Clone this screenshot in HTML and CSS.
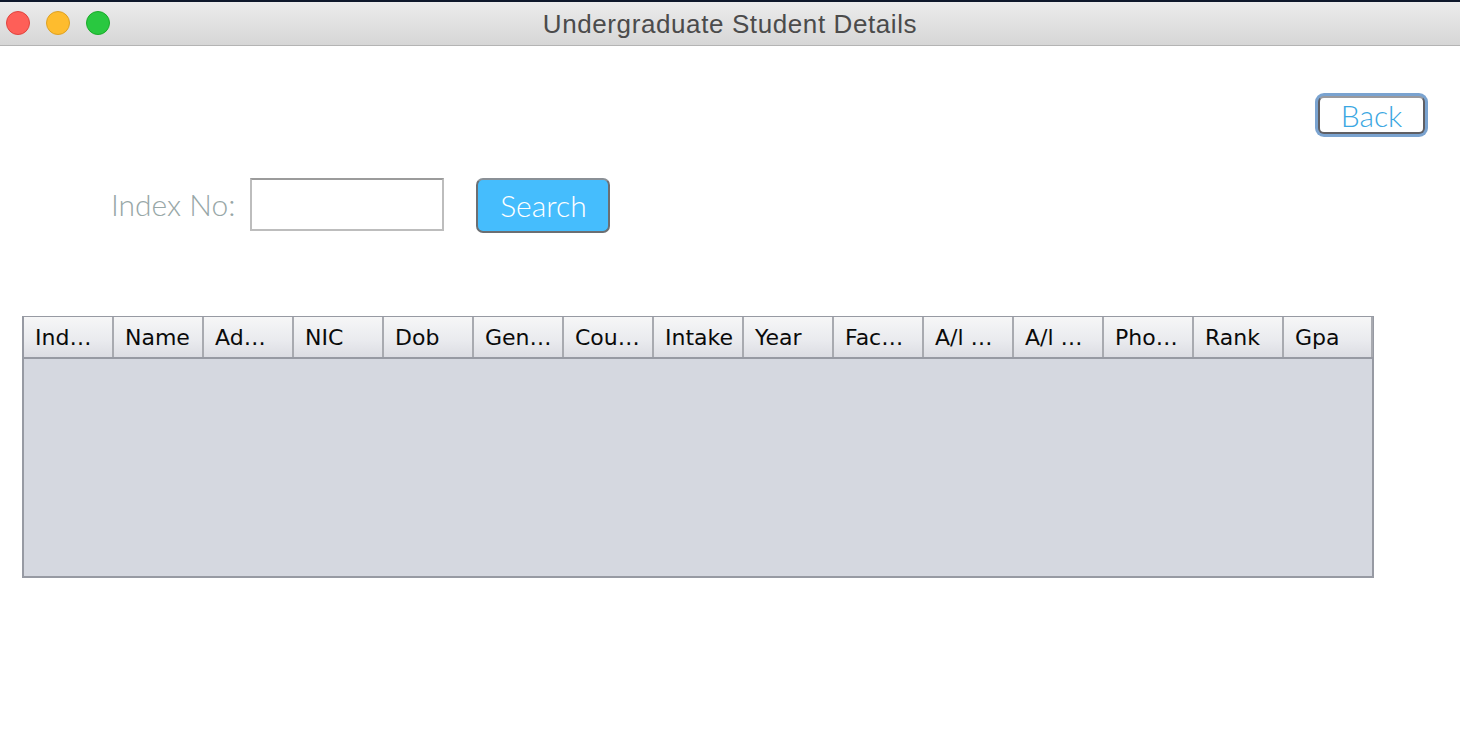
FILE: index.html
```html
<!DOCTYPE html>
<html>
<head>
<meta charset="utf-8">
<link rel="stylesheet" href="styles.css">
</head>
<body>
<div class="window">
  <div class="titlebar">
    <div class="lights">
      <span class="light red"></span>
      <span class="light yellow"></span>
      <span class="light green"></span>
    </div>
    <div class="title">Undergraduate Student Details</div>
  </div>
  <div class="content">
    <div class="toprow">
      <button class="back">Back</button>
    </div>
    <div class="searchrow">
      <label class="label">Index No:</label>
      <input class="field" type="text">
      <button class="search">Search</button>
    </div>
    <div class="table">
      <div class="thead">
        <div class="th">Ind…</div>
        <div class="th">Name</div>
        <div class="th">Ad…</div>
        <div class="th">NIC</div>
        <div class="th">Dob</div>
        <div class="th">Gen…</div>
        <div class="th">Cou…</div>
        <div class="th">Intake</div>
        <div class="th">Year</div>
        <div class="th">Fac…</div>
        <div class="th">A/l …</div>
        <div class="th">A/l …</div>
        <div class="th">Pho…</div>
        <div class="th">Rank</div>
        <div class="th last">Gpa</div>
      </div>
      <div class="tbody"></div>
    </div>
  </div>
</div>
</body>
</html>
```
FILE: styles.css
```css
html, body {
  margin: 0;
  padding: 0;
  background: #ffffff;
}
.window {
  width: 1460px;
  height: 730px;
  overflow: hidden;
  background: #ffffff;
}
.titlebar {
  position: relative;
  height: 43px;
  border-top: 2px solid #0e182b;
  border-bottom: 1px solid #b4b4b4;
  background: linear-gradient(#ececec, #d6d6d6);
  display: flex;
  align-items: center;
  justify-content: center;
}
.lights {
  position: absolute;
  left: 6px;
  top: 9px;
  display: flex;
  gap: 16px;
}
.light {
  width: 22px;
  height: 22px;
  border-radius: 50%;
  display: block;
}
.red { background: #fe5f58; border: 1px solid #e0443e; }
.yellow { background: #febc2e; border: 1px solid #dea123; }
.green { background: #29c840; border: 1px solid #1aab29; }
.title {
  font-family: "Liberation Sans", Arial, sans-serif;
  font-size: 26px;
  letter-spacing: 0.6px;
  color: #4b4b4b;
  margin-top: 1px;
}
.content {
  padding: 50px 0 0 22px;
}
.toprow {
  display: flex;
  justify-content: flex-end;
  padding-right: 35px;
}
.back {
  width: 107px;
  height: 38px;
  box-sizing: border-box;
  border: 2px solid #5f5f64;
  border-top-color: #9a9a9e;
  border-radius: 6px;
  box-shadow: 0 0 0 3px #7aa3d0;
  background: #ffffff;
  font-family: Lato, sans-serif;
  font-weight: 300;
  font-size: 30px;
  color: #3aa7e2;
  padding: 0;
  line-height: 33px;
}
.searchrow {
  display: flex;
  align-items: flex-start;
  margin-top: 44px;
  padding-left: 89px;
}
.label {
  font-family: Lato, sans-serif;
  font-weight: 300;
  font-size: 30px;
  color: #98a7a7;
  line-height: 52px;
  margin-right: 15px;
}
.field {
  width: 194px;
  height: 53px;
  box-sizing: border-box;
  border: 2px solid #bdbdbd;
  border-top-color: #9b9b9b;
  background: #ffffff;
  margin: 0;
  outline: none;
}
.search {
  margin-left: 32px;
  width: 134px;
  height: 55px;
  box-sizing: border-box;
  border: 2px solid #6b6f73;
  border-top-color: #8a9096;
  border-radius: 7px;
  background: #45bdfd;
  font-family: Lato, sans-serif;
  font-weight: 300;
  font-size: 30px;
  color: #ffffff;
  padding: 0;
  line-height: 43px;
}
.table {
  margin-top: 83px;
  width: 1352px;
  height: 262px;
  box-sizing: border-box;
  border: 2px solid #979aa3;
  border-top-width: 1px;
  background: #d5d8e0;
  display: flex;
  flex-direction: column;
}
.thead {
  display: flex;
  height: 42px;
  width: 1349px;
  box-sizing: border-box;
  border-bottom: 2px solid #979aa3;
  background: linear-gradient(#f6f6f7, #e9eaee 60%, #dcdde3);
}
.th {
  width: 90px;
  flex: none;
  box-sizing: border-box;
  border-right: 2px solid #a8aab0;
  font-family: "DejaVu Sans", "Lucida Grande", sans-serif;
  font-size: 22px;
  color: #0a0a0a;
  line-height: 41px;
  padding-left: 11px;
  white-space: nowrap;
  overflow: hidden;
}
.th.last {
  width: 89px;
}
.tbody {
  flex: 1;
}
```
